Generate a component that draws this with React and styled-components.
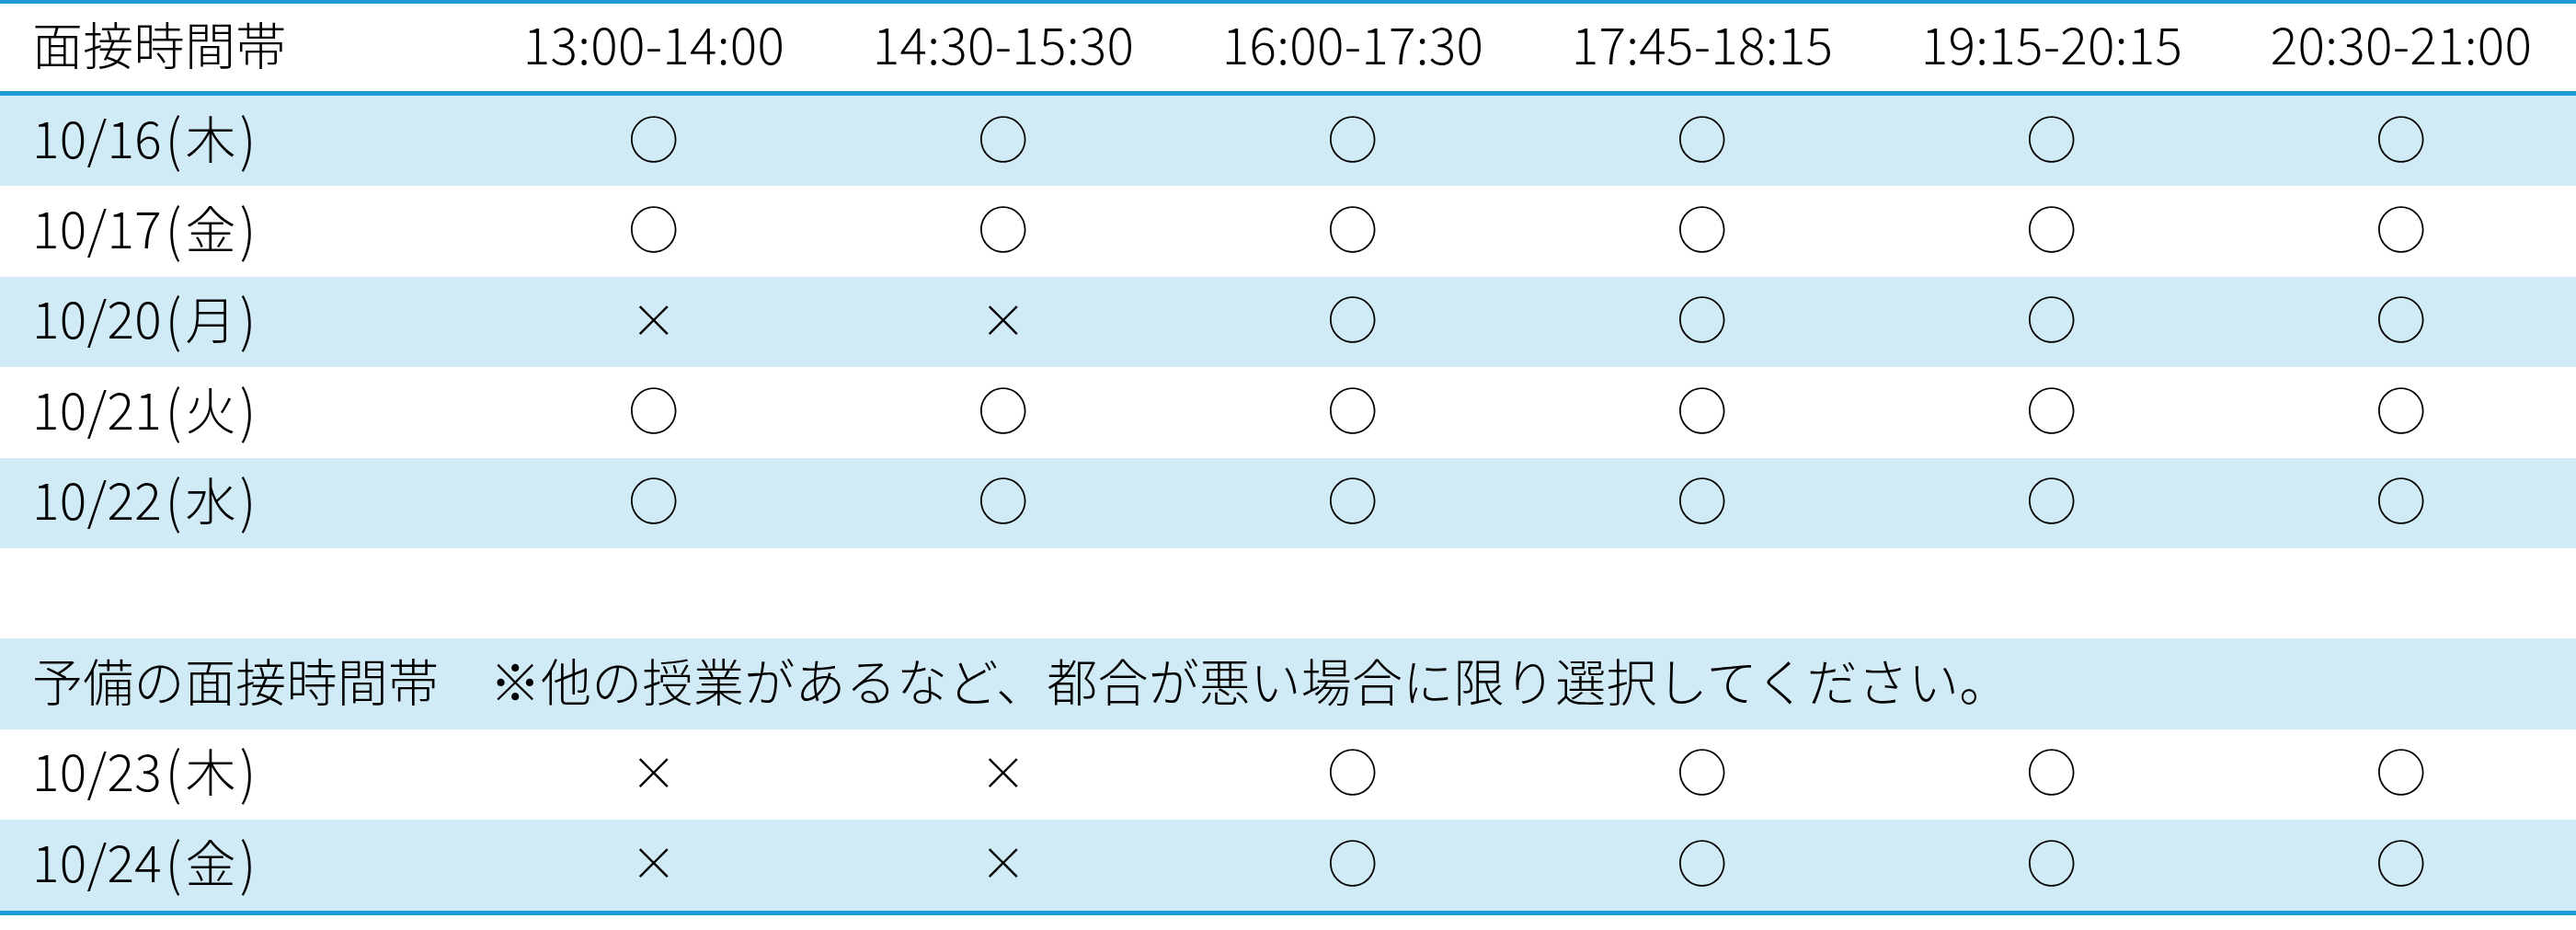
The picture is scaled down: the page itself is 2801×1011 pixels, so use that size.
import React from "react";
import styled, { createGlobalStyle } from "styled-components";

const Global = createGlobalStyle`
  html, body { margin: 0; padding: 0; background: #ffffff; }
  body {
    font-family: "Noto Sans CJK JP", "Noto Sans", sans-serif;
    color: #000000;
  }
`;

const BLUE = "#1c9bd6";
const SHADE = "#d1ebf6";

const Sheet = styled.div`
  width: 2801px;
  display: flex;
  flex-direction: column;
  border-top: 4px solid ${BLUE};
  border-bottom: 5px solid ${BLUE};
  font-size: 55px;
  font-weight: 300;
  line-height: 1;
  letter-spacing: 0.3px;
`;

const Row = styled.div`
  display: grid;
  grid-template-columns: 521px repeat(6, 1fr);
  height: ${(p) => (p.$header ? "95px" : "98.4px")};
  background: ${(p) => (p.$shade ? SHADE : "#ffffff")};
  border-bottom: ${(p) => (p.$header ? `5px solid ${BLUE}` : "none")};
`;

const LabelCell = styled.div`
  display: flex;
  align-items: center;
  padding-left: 35px;
  padding-bottom: 10px;
  white-space: nowrap;
  grid-column: ${(p) => (p.$wide ? "1 / -1" : "auto")};
`;

const SlotCell = styled.div`
  display: flex;
  align-items: center;
  justify-content: center;
  padding-bottom: 10px;
  white-space: nowrap;
`;

const Paren = styled.span`
  display: inline-block;
  padding: 0 4px;
  transform: scaleY(1.12);
`;

const Mark = styled.span`
  font-size: ${(p) => (p.$ok ? "55px" : "50px")};
`;

const times = [
  "13:00-14:00",
  "14:30-15:30",
  "16:00-17:30",
  "17:45-18:15",
  "19:15-20:15",
  "20:30-21:00",
];

const all = [1, 1, 1, 1, 1, 1];
const late = [0, 0, 1, 1, 1, 1];

const primary = [
  { day: "10/16", wd: "木", slots: all },
  { day: "10/17", wd: "金", slots: all },
  { day: "10/20", wd: "月", slots: late },
  { day: "10/21", wd: "火", slots: all },
  { day: "10/22", wd: "水", slots: all },
];

const reserve = [
  { day: "10/23", wd: "木", slots: late },
  { day: "10/24", wd: "金", slots: late },
];

function DateRow({ day, wd, slots, shade }) {
  return (
    <Row $shade={shade}>
      <LabelCell>
        {day}
        <Paren>(</Paren>
        {wd}
        <Paren>)</Paren>
      </LabelCell>
      {slots.map((s, i) => (
        <SlotCell key={i}>
          <Mark $ok={!!s}>{s ? "○" : "×"}</Mark>
        </SlotCell>
      ))}
    </Row>
  );
}

export default function App() {
  return (
    <>
      <Global />
      <Sheet>
        <Row $header>
          <LabelCell>面接時間帯</LabelCell>
          {times.map((t) => (
            <SlotCell key={t}>{t}</SlotCell>
          ))}
        </Row>
        {primary.map((r, i) => (
          <DateRow key={r.day} {...r} shade={i % 2 === 0} />
        ))}
        <Row />
        <Row $shade>
          <LabelCell $wide>
            予備の面接時間帯　※他の授業があるなど、都合が悪い場合に限り選択してください。
          </LabelCell>
        </Row>
        {reserve.map((r, i) => (
          <DateRow key={r.day} {...r} shade={i % 2 === 1} />
        ))}
      </Sheet>
    </>
  );
}
